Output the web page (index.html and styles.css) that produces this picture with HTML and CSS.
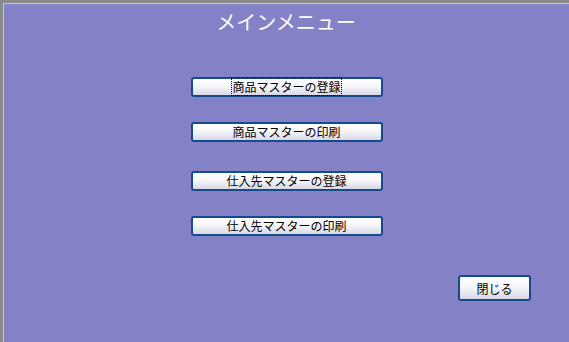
FILE: index.html
```html
<!DOCTYPE html>
<html lang="ja">
<head>
  <meta charset="UTF-8" />
  <meta name="viewport" content="width=device-width,initial-scale=1.0" />
  <title>メインメニュー</title>
  <link rel="stylesheet" href="styles.css">
</head>
<body>
  <main class="frame">
    <h1 class="title">メインメニュー</h1>
    <nav class="menu" aria-label="メインメニュー">
      <button class="menu-btn"><span class="focused">商品マスターの登録</span></button>
      <button class="menu-btn">商品マスターの印刷</button>
      <button class="menu-btn wide-gap">仕入先マスターの登録</button>
      <button class="menu-btn">仕入先マスターの印刷</button>
    </nav>
    <div class="footer">
      <button class="close-btn">閉じる</button>
    </div>
  </main>
</body>
</html>
```

FILE: styles.css
```css
html, body { margin: 0; height: 100%; }
body {
  background: #8482c6;
  font-family: "Noto Sans CJK JP", "DejaVu Sans", sans-serif;
}
.frame {
  box-sizing: border-box;
  height: 342px;
  border-top: 3px solid #8a8a8a;
  border-left: 3px solid #8a8a8a;
  box-shadow: inset 1px 1px 0 #c8c8c8;
}
.title {
  margin: 0;
  padding-top: 4px;
  height: 30px;
  line-height: 30px;
  text-align: center;
  font-size: 20px;
  font-weight: normal;
  color: #ffffff;
}
.menu {
  display: flex;
  flex-direction: column;
  align-items: center;
  margin-top: 40px;
  padding-left: 1px;
}
.menu-btn, .close-btn {
  box-sizing: border-box;
  border: 2px solid #174a8a;
  border-radius: 3px;
  background: linear-gradient(#ffffff 0%, #f6f6fa 45%, #d8d8e6 100%);
  color: #000000;
  font-family: inherit;
  font-size: 12px;
  padding: 0;
  cursor: pointer;
}
.menu-btn {
  width: 192px;
  height: 20px;
  line-height: 16px;
  margin-bottom: 25px;
}
.menu-btn.wide-gap { margin-top: 4px; }
.focused { outline: 1px dotted #000; outline-offset: 0; }
.footer {
  display: flex;
  justify-content: flex-end;
  padding-right: 38px;
  margin-top: 14px;
}
.close-btn {
  width: 73px;
  height: 26px;
}
```
